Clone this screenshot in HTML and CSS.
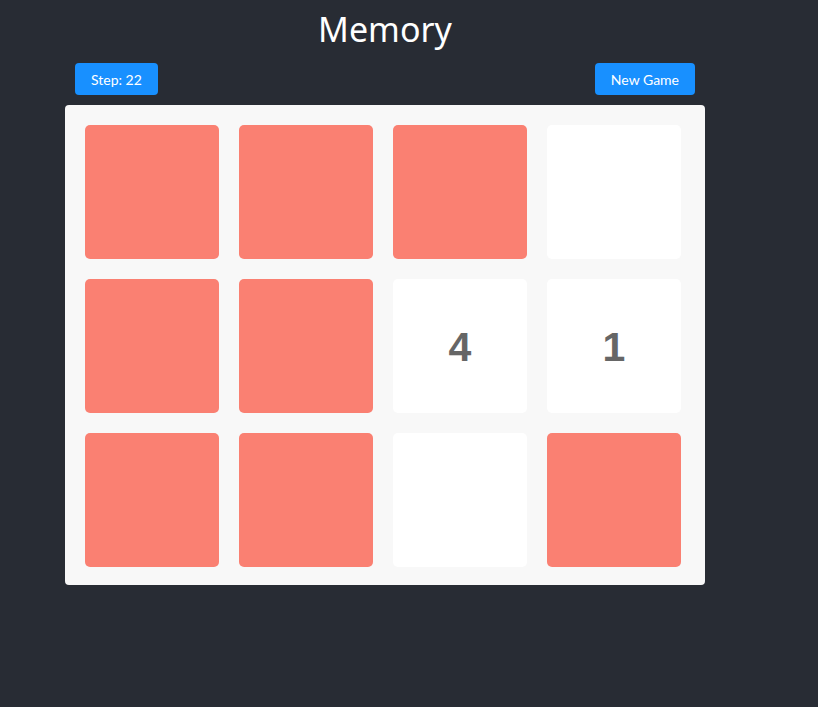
FILE: index.html
```html
<!DOCTYPE html>
<html>
<head>
<meta charset="utf-8">
<link rel="stylesheet" href="styles.css">
</head>
<body>
<div class="app">
  <h1 class="title">Memory</h1>
  <div class="toolbar">
    <button class="btn">Step: 22</button>
    <button class="btn">New Game</button>
  </div>
  <div class="board">
    <div class="card back"></div>
    <div class="card back"></div>
    <div class="card back"></div>
    <div class="card face"></div>
    <div class="card back"></div>
    <div class="card back"></div>
    <div class="card face">4</div>
    <div class="card face">1</div>
    <div class="card back"></div>
    <div class="card back"></div>
    <div class="card face"></div>
    <div class="card back"></div>
  </div>
</div>
</body>
</html>
```
FILE: styles.css
```css
html, body {
  margin: 0;
  padding: 0;
  background: #282c34;
  height: 100%;
}
body {
  font-family: "Noto Sans", "Open Sans", sans-serif;
}
.app {
  width: 770px;
  display: flex;
  flex-direction: column;
  align-items: center;
}
.title {
  margin: 0;
  height: 56px;
  line-height: 58px;
  font-size: 34px;
  font-weight: 400;
  color: #ffffff;
}
.toolbar {
  width: 620px;
  margin-top: 7px;
  display: flex;
  justify-content: space-between;
}
.btn {
  height: 32px;
  padding: 0 16px;
  border: none;
  border-radius: 4px;
  background: #1890ff;
  color: #fff;
  font-family: Lato, "Noto Sans", sans-serif;
  font-size: 14px;
}
.board {
  box-sizing: border-box;
  width: 640px;
  height: 480px;
  margin-top: 10px;
  padding: 20px 24px 18px 20px;
  background: #f8f8f8;
  border-radius: 4px;
  display: grid;
  grid-template-columns: repeat(4, 134px);
  grid-template-rows: repeat(3, 134px);
  gap: 20px;
}
.card {
  border-radius: 5px;
  display: flex;
  align-items: center;
  justify-content: center;
  padding-top: 3px;
  box-sizing: border-box;
  font-family: "Liberation Sans", Arial, sans-serif;
  font-weight: 700;
  font-size: 41px;
  color: #666666;
}
.back {
  background: #fa8072;
}
.face {
  background: #ffffff;
}
```
